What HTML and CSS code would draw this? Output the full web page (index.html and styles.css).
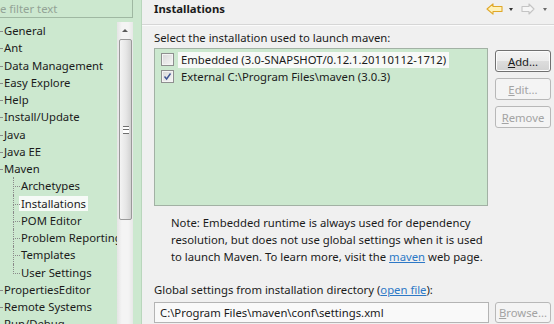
FILE: index.html
```html
<!DOCTYPE html>
<html lang="en">
  <head>
    <meta charset="UTF-8" />
    <meta name="viewport" content="width=device-width, initial-scale=1.0" />
    <title>Preferences - Maven Installations</title>
    <link rel="stylesheet" href="styles.css">
  </head>
  <body>
    <div class="window">
      <!-- left: preference tree -->
      <aside class="sidebar">
        <div class="filter">e filter text</div>
        <div class="tree-box">
          <ul class="tree">
            <li class="node">General</li>
            <li class="node">Ant</li>
            <li class="node">Data Management</li>
            <li class="node">Easy Explore</li>
            <li class="node">Help</li>
            <li class="node">Install/Update</li>
            <li class="node">Java</li>
            <li class="node">Java EE</li>
            <li class="node">Maven</li>
            <li class="child">Archetypes</li>
            <li class="child"><span class="selected">Installations</span></li>
            <li class="child">POM Editor</li>
            <li class="child">Problem Reporting</li>
            <li class="child">Templates</li>
            <li class="child last">User Settings</li>
            <li class="node">PropertiesEditor</li>
            <li class="node">Remote Systems</li>
            <li class="node">Run/Debug</li>
          </ul>
          <div class="scrollbar">
            <div class="scroll-up"><span class="tri"></span></div>
            <div class="thumb"><span class="grip"></span></div>
          </div>
        </div>
      </aside>

      <!-- right: page -->
      <main class="page">
        <div class="page-header">
          <h1>Installations</h1>
          <div class="nav">
            <svg width="17" height="12" viewBox="0 0 17 12">
              <path d="M1 6 L7 0.8 L7 3.5 L16 3.5 L16 8.5 L7 8.5 L7 11.2 Z" fill="#fff2b8" stroke="#e0a82a" stroke-width="1.1" stroke-linejoin="round"/>
            </svg>
            <span class="drop"></span>
            <svg width="14" height="12" viewBox="0 0 14 12">
              <path d="M13 6 L8 1 L8 3.5 L1 3.5 L1 8.5 L8 8.5 L8 11 Z" fill="#f6f6f6" stroke="#c4c4c4" stroke-width="1.1" stroke-linejoin="round"/>
            </svg>
            <span class="drop light"></span>
          </div>
        </div>

        <div class="page-body">
          <p class="intro">Select the installation used to launch maven:</p>

          <div class="install-row">
            <div class="install-list">
              <div class="install">
                <span class="checkbox"></span>
                <span class="label current">Embedded (3.0-SNAPSHOT/0.12.1.20110112-1712)</span>
              </div>
              <div class="install">
                <span class="checkbox">
                  <svg width="9" height="9" viewBox="0 0 9 9">
                    <path d="M1.5 4.5 L3.6 7 L7.5 1.5" fill="none" stroke="#3f5593" stroke-width="1.4"/>
                  </svg>
                </span>
                <span class="label">External C:\Program Files\maven (3.0.3)</span>
              </div>
            </div>
            <div class="buttons">
              <button class="btn"><u>A</u>dd...</button>
              <button class="btn" disabled><u>E</u>dit...</button>
              <button class="btn" disabled><u>R</u>emove</button>
            </div>
          </div>

          <p class="note">
            Note: Embedded runtime is always used for dependency<br>
            resolution, but does not use global settings when it is used<br>
            to launch Maven. To learn more, visit the <a href="#">maven</a> web page.
          </p>

          <p class="global">Global settings from installation directory (<a href="#">open file</a>):</p>

          <div class="file-row">
            <div class="textbox">C:\Program Files\maven\conf\settings.xml</div>
            <button class="btn" disabled><u>B</u>rowse...</button>
          </div>
        </div>
      </main>
    </div>
  </body>
</html>
```

FILE: styles.css
```css
body {
  margin: 0;
  padding: 0;
  font-family: "Noto Sans", "Open Sans", sans-serif;
  font-size: 11.3px;
  color: #1b1b1b;
  overflow: hidden;
}

.window {
  display: flex;
  width: 554px;
  height: 324px;
  overflow: hidden;
}

/* 左侧 树 */
.sidebar {
  width: 133px;
  padding-right: 8px;
  flex-shrink: 0;
  background-color: #cce8cf;
  border-right: 1px solid #b9d6bc;
  display: flex;
  flex-direction: column;
  overflow: hidden;
}

.filter {
  height: 19px;
  margin-top: -3px;
  margin-left: -2px;
  border: 1px solid #9fb8a2;
  line-height: 21px;
  color: #93a396;
  padding-left: 1px;
  white-space: nowrap;
  overflow: hidden;
}

.tree-box {
  flex: 1;
  display: flex;
  margin-top: 4px;
  overflow: hidden;
}

.tree {
  flex: 1;
  list-style: none;
  margin: 0;
  padding: 0;
  overflow: hidden;
  white-space: nowrap;
}

.tree li {
  position: relative;
  height: 17.25px;
  line-height: 17.25px;
}

.tree .node {
  padding-left: 4px;
}

.tree .node::before {
  content: "";
  position: absolute;
  left: 0;
  top: 9px;
  width: 2px;
  border-top: 1px dotted #8a8a8a;
}

.tree .child {
  padding-left: 21px;
}

.tree .child::before {
  content: "";
  position: absolute;
  left: 13px;
  top: 0;
  width: 6px;
  height: 9px;
  border-left: 1px dotted #8a8a8a;
  border-bottom: 1px dotted #8a8a8a;
}

.tree .child::after {
  content: "";
  position: absolute;
  left: 13px;
  top: 9px;
  bottom: 0;
  border-left: 1px dotted #8a8a8a;
}

.tree .child.last::after {
  display: none;
}

.tree .selected {
  background-color: #f7faf7;
  padding: 0 2px;
  margin-left: -2px;
}

.scrollbar {
  width: 16px;
  flex-shrink: 0;
  background: linear-gradient(to right, #e4e4e4, #f4f4f4 30%, #f4f4f4 70%, #e8e8e8);
}

.scroll-up {
  height: 17px;
  display: flex;
  justify-content: center;
  align-items: center;
}

.scroll-up .tri {
  width: 0;
  height: 0;
  border-left: 3px solid transparent;
  border-right: 3px solid transparent;
  border-bottom: 3px solid #5a5a5a;
}

.thumb {
  margin: 0 1px 0 2px;
  height: 179px;
  border: 1px solid #9a9a9a;
  border-radius: 2px;
  background: linear-gradient(to right, #f4f4f4, #e6e6e6 55%, #d2d2d2);
  display: flex;
  justify-content: center;
  align-items: center;
}

.thumb .grip {
  width: 6px;
  height: 6px;
  border-top: 1px solid #6f6f6f;
  border-bottom: 1px solid #6f6f6f;
  background: linear-gradient(#fff 0, #fff 2px, #6f6f6f 2px, #6f6f6f 3px, #fff 3px);
}

/* 右侧 页面 */
.page {
  flex: 1;
  min-width: 0;
  background-color: #f0f0f0;
  display: flex;
  flex-direction: column;
}

.page-header {
  height: 24px;
  display: flex;
  justify-content: space-between;
  align-items: flex-start;
  border-bottom: 1px solid #d6d6d6;
  box-shadow: 0 1px 0 #fbfbfb;
  padding-left: 12px;
}

.page-header h1 {
  margin: 0;
  font-size: 11.3px;
  font-weight: bold;
  line-height: 18px;
}

.nav {
  display: flex;
  align-items: center;
  gap: 6px;
  padding: 3px 7px 0 0;
}

.nav .drop {
  width: 0;
  height: 0;
  border-left: 2.5px solid transparent;
  border-right: 2.5px solid transparent;
  border-top: 3px solid #333;
  margin-right: 2px;
}

.nav .drop.light {
  border-top-color: #6a6a6a;
  margin-right: 0;
  margin-left: 2px;
}

.page-body {
  padding: 0 3px 0 12px;
}

.page-body p {
  margin: 0;
  line-height: 17px;
  white-space: nowrap;
}

.intro {
  margin-top: 4px !important;
}

.install-row {
  display: flex;
  margin-top: 2px;
}

.install-list {
  width: 320px;
  height: 152px;
  padding: 2px 6px;
  border: 1px solid #a2b1a4;
  background-color: #cce8cf;
}

.install {
  display: flex;
  align-items: center;
  height: 17px;
}

.checkbox {
  width: 11px;
  height: 11px;
  border: 1px solid #8e8f8f;
  background: linear-gradient(135deg, #d8d8d8, #f6f6f6);
  box-shadow: inset 0 0 0 1px #f4f4f4;
  margin-right: 4px;
  display: flex;
  justify-content: center;
  align-items: center;
}

.label {
  padding: 0 3px;
  line-height: 16px;
  white-space: nowrap;
}

.label.current {
  background-color: #f7f9f7;
}

.buttons {
  display: flex;
  flex-direction: column;
  gap: 6px;
  margin: 2px 0 0 7px;
}

.btn {
  width: 56px;
  height: 22px;
  padding: 0;
  font-family: inherit;
  font-size: 11.3px;
  color: #1b1b1b;
  border: 1px solid #707070;
  border-radius: 3px;
  background: linear-gradient(#f3f3f3 0, #ececec 50%, #dddddd 51%, #d2d2d2);
  box-shadow: inset 0 0 0 1px #fcfcfc;
}

.btn:disabled {
  color: #a3a3a3;
  border-color: #b8b8b8;
  background: #f4f4f4;
  box-shadow: none;
}

.note {
  margin: 8px 0 0 17px !important;
}

.global {
  margin-top: 16px !important;
}

a {
  color: #2d78c6;
}

.file-row {
  display: flex;
  margin-top: 4px;
  gap: 6px;
}

.textbox {
  width: 328px;
  height: 19px;
  line-height: 19px;
  padding-left: 5px;
  border: 1px solid #b4b4b4;
  background-color: #f9f9f9;
  white-space: nowrap;
}

.file-row .btn {
  height: 21px;
}
```
